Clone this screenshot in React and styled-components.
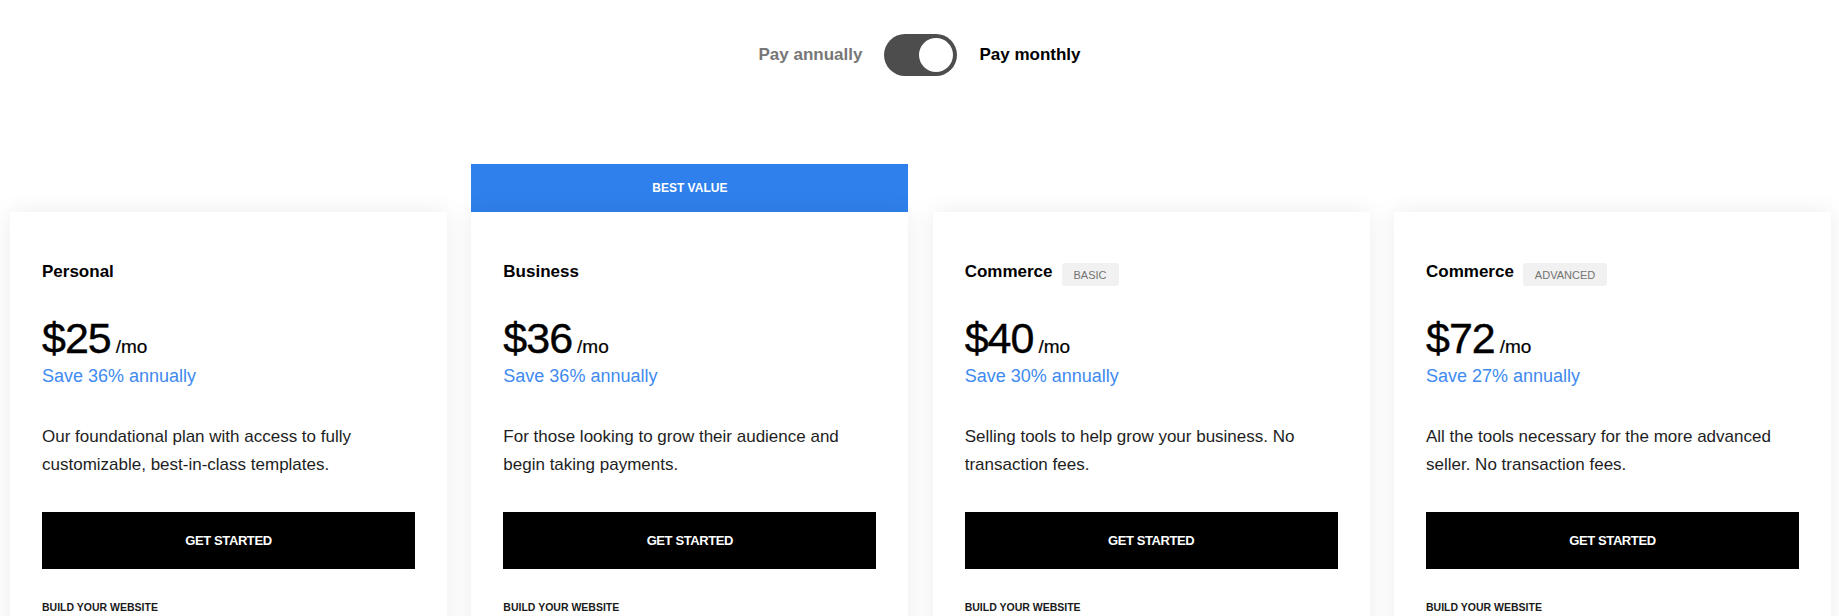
import styled, { createGlobalStyle } from 'styled-components';

const GlobalStyle = createGlobalStyle`
  body {
    margin: 0;
    background: #ffffff;
    font-family: "Liberation Sans", Arial, sans-serif;
    color: #000000;
  }
`;

const Page = styled.div`
  padding-top: 34px;
`;

const ToggleRow = styled.div`
  display: flex;
  justify-content: center;
  align-items: center;
  gap: 22px;
  height: 42px;
`;

const ToggleLabel = styled.span`
  font-size: 17px;
  font-weight: 700;
  color: ${p => (p.$active ? '#000000' : '#777777')};
`;

const Track = styled.div`
  position: relative;
  width: 73px;
  height: 42px;
  border-radius: 21px;
  background: #4d4d4d;
`;

const Knob = styled.div`
  position: absolute;
  top: 4px;
  right: 4px;
  width: 34px;
  height: 34px;
  border-radius: 50%;
  background: #ffffff;
`;

const Plans = styled.div`
  display: grid;
  grid-template-columns: repeat(4, 437px);
  column-gap: 24.33px;
  padding: 0 8px 0 10px;
  margin-top: 88px;
`;

const Column = styled.div`
  display: flex;
  flex-direction: column;
  padding-top: ${p => (p.$featured ? 0 : 48)}px;
`;

const Banner = styled.div`
  height: 48px;
  display: flex;
  align-items: center;
  justify-content: center;
  background: #2f80ec;
  color: #ffffff;
  font-size: 12px;
  font-weight: 700;
`;

const Card = styled.div`
  background: #ffffff;
  box-shadow: 0 0 22px rgba(0, 0, 0, 0.08);
  padding: 48px 32px 40px;
`;

const TitleRow = styled.div`
  display: flex;
  align-items: flex-start;
  gap: 9px;
  height: 24px;
`;

const Title = styled.h3`
  margin: 0;
  font-size: 17px;
  line-height: 24px;
  font-weight: 700;
`;

const Badge = styled.span`
  display: inline-flex;
  align-items: center;
  height: 23px;
  margin-top: 3px;
  padding: 0 12px;
  border-radius: 3px;
  background: #f1f1f1;
  color: #737373;
  font-size: 11px;
`;

const PriceRow = styled.div`
  display: flex;
  align-items: baseline;
  gap: 5px;
  margin-top: 36px;
  height: 36px;
`;

const Amount = styled.span`
  font-size: 43px;
  line-height: 36px;
  letter-spacing: -1px;
  -webkit-text-stroke: 0.4px #000000;
`;

const Period = styled.span`
  font-size: 19px;
  line-height: 1;
  -webkit-text-stroke: 0.2px #000000;
`;

const Save = styled.div`
  margin-top: 8px;
  font-size: 18px;
  line-height: 24px;
  color: #3e8af0;
`;

const Description = styled.p`
  margin: 35px 0 0;
  font-size: 17px;
  line-height: 28px;
  color: #1e1e1e;
  min-height: 56px;
`;

const Button = styled.button`
  display: block;
  width: 100%;
  height: 57px;
  margin-top: 33px;
  border: none;
  background: #000000;
  color: #ffffff;
  font-family: inherit;
  font-size: 13px;
  font-weight: 700;
  letter-spacing: -0.4px;
  cursor: pointer;
`;

const SectionLabel = styled.div`
  margin-top: 31px;
  font-size: 10.5px;
  line-height: 14px;
  font-weight: 700;
  color: #1a1a1a;
`;

const Feature = styled.div`
  margin-top: 14px;
  font-size: 15px;
  line-height: 22px;
  color: #1e1e1e;
`;

const plans = [
  {
    name: 'Personal',
    price: 25,
    save: 36,
    desc: 'Our foundational plan with access to fully customizable, best-in-class templates.',
  },
  {
    name: 'Business',
    price: 36,
    save: 36,
    featured: true,
    desc: 'For those looking to grow their audience and begin taking payments.',
  },
  {
    name: 'Commerce',
    badge: 'BASIC',
    price: 40,
    save: 30,
    desc: 'Selling tools to help grow your business. No transaction fees.',
  },
  {
    name: 'Commerce',
    badge: 'ADVANCED',
    price: 72,
    save: 27,
    desc: 'All the tools necessary for the more advanced seller. No transaction fees.',
  },
];

const App = () => {
  return (
    <>
      <GlobalStyle />
      <Page>
        <ToggleRow>
          <ToggleLabel>Pay annually</ToggleLabel>
          <Track>
            <Knob />
          </Track>
          <ToggleLabel $active>Pay monthly</ToggleLabel>
        </ToggleRow>
        <Plans>
          {plans.map(plan => (
            <Column key={plan.name + plan.price} $featured={plan.featured}>
              {plan.featured && <Banner>BEST VALUE</Banner>}
              <Card>
                <TitleRow>
                  <Title>{plan.name}</Title>
                  {plan.badge && <Badge>{plan.badge}</Badge>}
                </TitleRow>
                <PriceRow>
                  <Amount>${plan.price}</Amount>
                  <Period>/mo</Period>
                </PriceRow>
                <Save>Save {plan.save}% annually</Save>
                <Description>{plan.desc}</Description>
                <Button>GET STARTED</Button>
                <SectionLabel>BUILD YOUR WEBSITE</SectionLabel>
                <Feature>Custom domain</Feature>
                <Feature>SSL security</Feature>
              </Card>
            </Column>
          ))}
        </Plans>
      </Page>
    </>
  );
};

export default App;
